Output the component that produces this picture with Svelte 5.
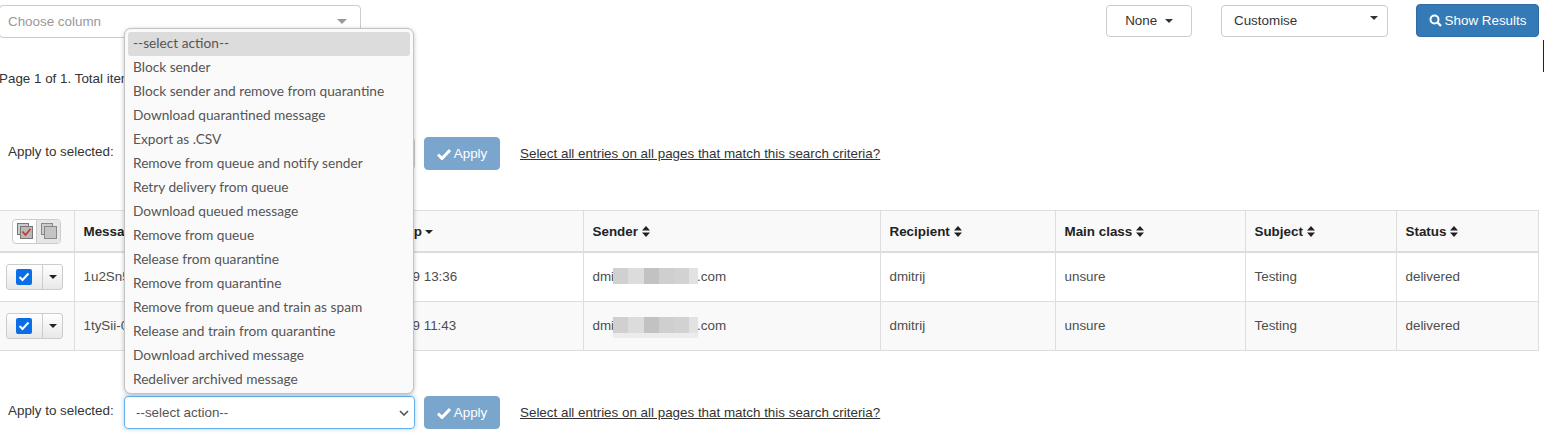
<script>
  const actions = ["--select action--","Block sender","Block sender and remove from quarantine","Download quarantined message","Export as .CSV","Remove from queue and notify sender","Retry delivery from queue","Download queued message","Remove from queue","Release from quarantine","Remove from quarantine","Remove from queue and train as spam","Release and train from quarantine","Download archived message","Redeliver archived message"];
  const heads = ["Sender","Recipient","Main class","Subject","Status"];
  const rows = [
    {id:"1u2Sn5-000Abc-Q1", ts:"2025-05-09 13:36", tall:false},
    {id:"1tySii-000Def-R2", ts:"2025-05-09 11:43", tall:true}
  ];
</script>

{#snippet applyBar(focused)}
  <div class="apply-bar">
    <span class="apply-label">Apply to selected:</span>
    <div class="action-select" class:focused>
      <span>--select action--</span>
      <svg width="10" height="6" viewBox="0 0 10 6"><path d="M1 1l4 4 4-4" fill="none" stroke="#555" stroke-width="1.6"/></svg>
    </div>
    <button class="apply-btn">
      <svg width="14" height="12" viewBox="0 0 14 12"><path d="M1 6.5l4 4 8-8.5" fill="none" stroke="#fff" stroke-width="3"/></svg>
      Apply
    </button>
    <a class="select-all" href="#top">Select all entries on all pages that match this search criteria?</a>
  </div>
{/snippet}

{#snippet sort()}
  <svg class="sort" width="8" height="11" viewBox="0 0 8 11"><path d="M0 4.5L4 0l4 4.5zM0 6.5h8L4 11z" fill="#222"/></svg>
{/snippet}

<div class="page">
  <div class="toolbar">
    <div class="column-select"><span>Choose column</span><i class="arrow"></i></div>
    <div class="tools">
      <button class="btn none">None <i class="caret"></i></button>
      <div class="btn customise"><span>Customise</span><i class="caret up"></i></div>
      <button class="show">
        <svg width="13" height="13" viewBox="0 0 13 13"><circle cx="5.5" cy="5.5" r="4" fill="none" stroke="#fff" stroke-width="2"/><path d="M8.5 8.5l3.5 3.5" stroke="#fff" stroke-width="2.4"/></svg>
        Show Results
      </button>
    </div>
  </div>

  <p class="pager">Page 1 of 1. Total items: 2</p>

  {@render applyBar(false)}

  <table>
    <colgroup>
      <col style="width:74px"/><col style="width:268px"/><col style="width:241px"/><col style="width:297px"/><col style="width:175px"/><col style="width:190px"/><col style="width:151px"/><col style="width:142px"/>
    </colgroup>
    <thead>
      <tr>
        <th class="sel">
          <div class="sel-all">
            <span class="on">
              <svg width="18" height="18" viewBox="0 0 18 18"><rect x="1.5" y="1.5" width="11" height="11" fill="#ccc" stroke="#777"/><rect x="4.5" y="4.5" width="12" height="12" fill="#b9b9b9" stroke="#777"/><path d="M6.5 9.5l3 3.5 5-6" fill="none" stroke="#c8322c" stroke-width="1.6"/></svg>
            </span>
            <span class="off">
              <svg width="18" height="18" viewBox="0 0 18 18"><rect x="1.5" y="1.5" width="11" height="11" fill="#ccc" stroke="#888"/><rect x="4.5" y="4.5" width="12" height="12" fill="#c4c4c4" stroke="#888"/></svg>
            </span>
          </div>
        </th>
        <th>Message ID {@render sort()}</th>
        <th>Timestamp<i class="caret dark"></i></th>
        {#each heads as h}<th>{h} {@render sort()}</th>{/each}
      </tr>
    </thead>
    <tbody>
      {#each rows as r}
        <tr>
          <td class="sel">
            <div class="row-check">
              <span class="check-cell"><span class="check"><svg width="12" height="10" viewBox="0 0 12 10"><path d="M1.5 5l3 3 6-6.5" fill="none" stroke="#fff" stroke-width="2"/></svg></span></span>
              <span class="check-caret"><i class="caret dark"></i></span>
            </div>
          </td>
          <td>{r.id}</td>
          <td>{r.ts}</td>
          <td>dmi<span class="redact" class:tall={r.tall}></span>.com</td>
          <td>dmitrij</td>
          <td>unsure</td>
          <td>Testing</td>
          <td>delivered</td>
        </tr>
      {/each}
    </tbody>
  </table>

  <div class="bottom-bar">{@render applyBar(true)}</div>

  <ul class="menu">
    {#each actions as a, i}<li class:current={i === 0}>{a}</li>{/each}
  </ul>
  <div class="edge"></div>
</div>

<style>
  :global(body) { margin: 0; background: #fff; }
  .page { position: relative; width: 1544px; height: 444px; overflow: hidden; font: 13.4px/20px "Liberation Sans", Arial, sans-serif; color: #333; }
  .toolbar { display: flex; justify-content: space-between; align-items: flex-start; padding: 4px 5px 0 0; height: 34px; }
  .column-select { box-sizing: border-box; width: 362px; height: 33px; margin: 1px 0 0 -1px; padding: 0 8px; border: 1px solid #ccc; border-radius: 4px; color: #999; display: flex; justify-content: space-between; align-items: center; }
  .arrow { width: 0; height: 0; border: 5px solid transparent; border-top-color: #999; border-bottom: 0; margin-right: 5px; }
  .tools { display: flex; align-items: flex-start; }
  .btn { box-sizing: border-box; height: 32px; margin-top: 1px; background: #fff; border: 1px solid #ccc; border-radius: 4px; font: inherit; color: #333; }
  .none { width: 86px; padding: 0; margin-right: 29px; }
  .none .caret { margin-left: 4px; }
  .customise { width: 167px; margin-right: 28px; padding: 0 9px 0 12px; display: flex; justify-content: space-between; align-items: center; }
  .caret { display: inline-block; width: 0; height: 0; border: 4px solid transparent; border-top-color: #333; border-bottom: 0; vertical-align: middle; margin-left: 3px; }
  .caret.up { margin-top: -6px; }
  .caret.dark { border-top-color: #222; }
  .show { box-sizing: border-box; width: 123px; height: 33px; background: #337ab7; border: 1px solid #2e6da4; border-radius: 4px; color: #fff; font: inherit; padding: 0; display: flex; align-items: center; justify-content: center; gap: 3px; }
  .pager { margin: 31px 0 0 -1px; }
  .apply-bar { display: flex; align-items: center; height: 33px; }
  .pager + .apply-bar { margin-top: 48px; }
  .apply-label { padding-left: 8px; margin-top: -4px; flex: 0 0 116px; }
  .action-select { box-sizing: border-box; width: 291px; height: 33px; padding: 0 5px 0 11px; border: 1px solid #ccc; border-radius: 4px; color: #555; display: flex; align-items: center; justify-content: space-between; }
  .action-select.focused { border-color: #66afe9; box-shadow: 0 0 4px rgba(102,175,233,.6); }
  .apply-btn { box-sizing: border-box; width: 76px; height: 33px; margin-left: 9px; background: #7aa5cd; border: 1px solid #7aa5cd; border-radius: 4px; color: #fff; font: inherit; padding: 0; display: flex; align-items: center; justify-content: center; gap: 3px; }
  .select-all { margin-left: 20px; color: #333; text-decoration: underline; }
  table { width: 1538px; margin-top: 40px; border-collapse: collapse; table-layout: fixed; }
  th, td { border: 1px solid #ddd; padding: 0 9px; text-align: left; white-space: nowrap; overflow: hidden; }
  th { height: 39px; background: #f9f9f9; border-bottom-width: 2px; color: #222; padding-top: 1px; }
  th:first-child, td:first-child { border-left: 0; padding: 0 0 0 6px; }
  td { height: 48px; color: #4d4d4d; }
  tbody tr:nth-child(2) td { background: #f9f9f9; }
  .sort { vertical-align: -1px; }
  th.sel { padding-left: 12px; padding-top: 0; }
  .sel-all { box-sizing: border-box; display: flex; width: 49px; height: 25px; border: 1px solid #ccc; border-radius: 4px; overflow: hidden; background: #fff; }
  .sel-all span { flex: 1; display: flex; align-items: center; justify-content: center; }
  .sel-all .off { background: #e6e6e6; border-left: 1px solid #ccc; }
  .row-check { box-sizing: border-box; display: flex; width: 57px; height: 26px; border: 1px solid #ccc; border-radius: 3px; background: linear-gradient(#fff, #e8e8e8); }
  .check-cell { width: 35px; display: flex; align-items: center; justify-content: center; border-right: 1px solid #ccc; }
  .check { width: 16px; height: 16px; margin-right: 2px; background: #0a6fe6; border-radius: 2px; display: flex; align-items: center; justify-content: center; }
  .check-caret { flex: 1; display: flex; align-items: center; justify-content: center; }
  .check-caret .caret { margin: 0; }
  .redact { display: inline-block; width: 85px; height: 16px; margin-left: -1px; margin-right: -1px; vertical-align: -3px; background: linear-gradient(90deg, #d0d0d0 0 15px, #dcdcdc 15px 31px, #c2c2c2 31px 46px, #cfcfcf 46px 61px, #d2d2d2 61px 76px, #e2e2e2 76px); }
  .redact.tall { box-shadow: 0 5px 0 #ececec; }
  .bottom-bar { margin-top: 45px; }
  .menu { position: absolute; left: 124px; top: 28px; box-sizing: border-box; width: 290px; height: 366px; margin: 0; padding: 3px; list-style: none; background: #fafafa; border: 1px solid #c4c4c4; border-radius: 7px; box-shadow: 0 1px 4px rgba(0,0,0,.25); font: 13.7px/22px Lato, sans-serif; color: #555; }
  .menu li { height: 24px; padding-left: 5px; border-radius: 3px; white-space: nowrap; }
  .menu li.current { background: #dcdcdc; }
  .edge { position: absolute; left: 1543px; top: 40px; width: 1px; height: 32px; background: #222; }
</style>
